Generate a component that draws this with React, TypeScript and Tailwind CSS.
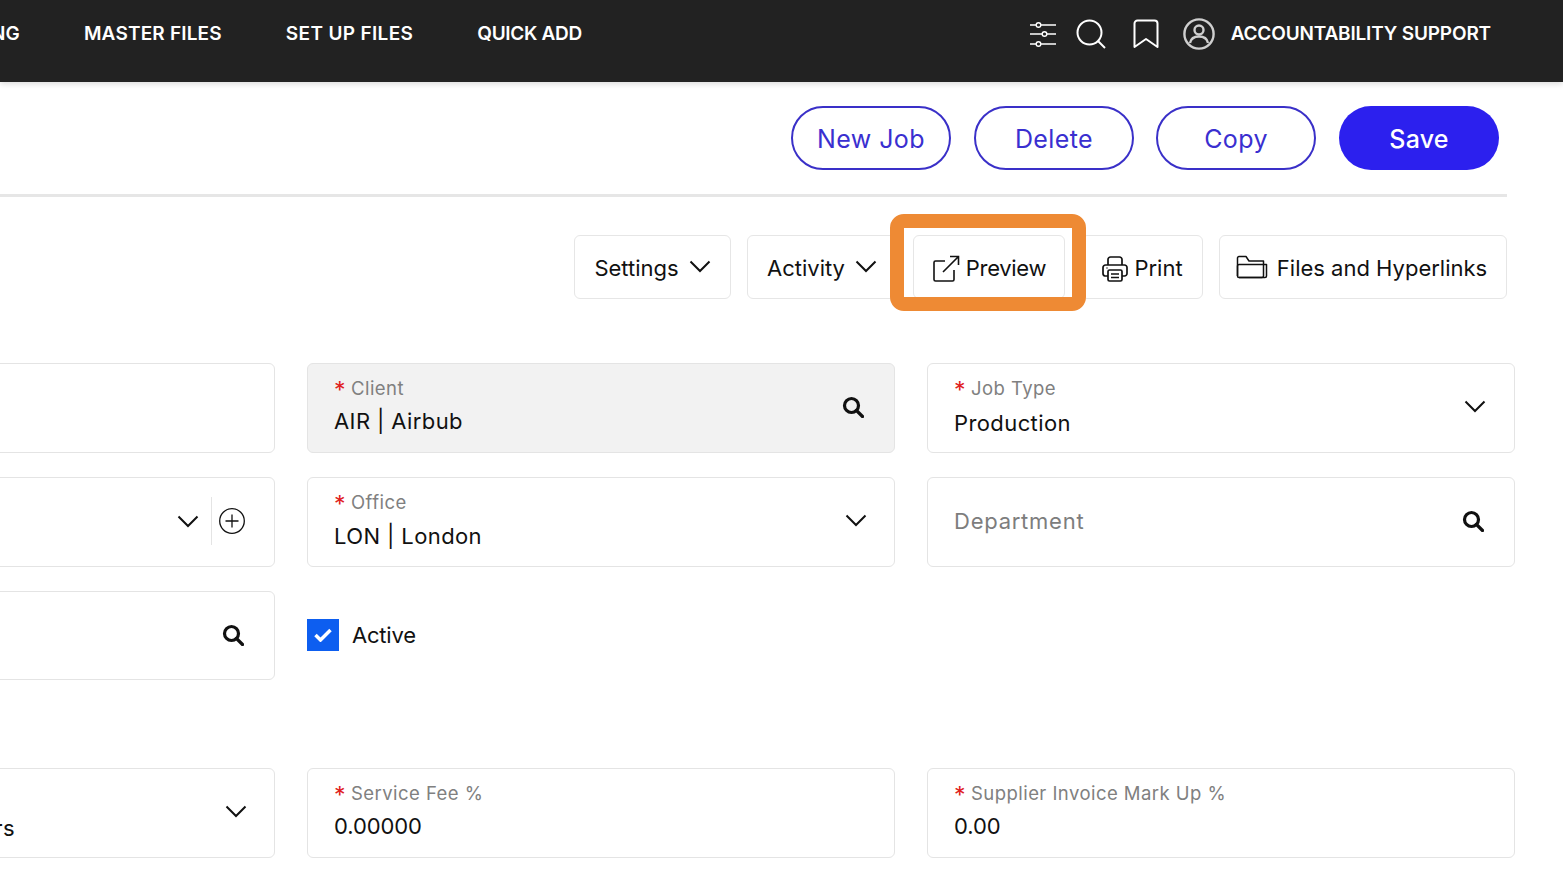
import React from "react";

const font = { fontFamily: "Inter, 'Noto Sans', sans-serif" };

function Chevron({ className = "" }: { className?: string }) {
  return (
    <svg viewBox="0 0 22 13" className={`w-[22px] h-[13px] ${className}`} fill="none" stroke="#111" strokeWidth="2">
      <path d="M1.5 1.5 11 11l9.5-9.5" />
    </svg>
  );
}

function SolidSearch({ className = "" }: { className?: string }) {
  return (
    <svg viewBox="0 0 22 22" className={`w-[22px] h-[22px] ${className}`} fill="none" stroke="#111" strokeWidth="3.2">
      <circle cx="9.5" cy="9.5" r="7" />
      <path d="m14.5 14.5 6 6" strokeLinecap="round" />
    </svg>
  );
}

function Field({
  label,
  value,
  required,
  placeholder,
  icon,
  gray,
  className = "",
  valueClass = "mt-[6px] tracking-[0.4px]",
  heightClass = "h-[90px]",
}: {
  label?: string;
  value?: string;
  required?: boolean;
  placeholder?: string;
  icon?: React.ReactNode;
  gray?: boolean;
  className?: string;
  valueClass?: string;
  heightClass?: string;
}) {
  return (
    <div
      className={`relative rounded-[6px] border border-[#e4e4e4] flex items-center justify-between pl-[26px] pr-[30px] ${heightClass} ${
        gray ? "bg-[#f2f2f2]" : "bg-white"
      } ${className}`}
    >
      {placeholder ? (
        <div className="pb-[2px] text-[22px] text-[#7d7d7d] tracking-[0.75px]">{placeholder}</div>
      ) : (
        <div className="flex flex-col self-start pt-[12px]">
          {label && (
            <div className="h-[24px] text-[18.5px] leading-[24px] text-[#808080] flex tracking-[0.45px]">
              {required && <span className="text-[#e02020] w-[17px] pt-[3px] text-[23px] leading-[23px] tracking-[0]">*</span>}
              <span>{label}</span>
            </div>
          )}
          {value && <div className={`text-[22px] leading-[30px] text-[#111] ${valueClass}`}>{value}</div>}
        </div>
      )}
      {icon}
    </div>
  );
}

function OutlineBtn({ children, className = "" }: { children: React.ReactNode; className?: string }) {
  return (
    <button className={`w-[160px] h-[64px] pt-[4px] rounded-full border-2 border-[#3a30c8] text-[#3a2fd0] text-[25px] tracking-[0.4px] bg-white flex items-center justify-center ${className}`}>
      {children}
    </button>
  );
}

function ToolBtn({ children, className = "" }: { children: React.ReactNode; className?: string }) {
  return (
    <div className={`relative h-[64px] pt-[2px] rounded-[6px] border border-[#e6e6e6] bg-white flex items-center justify-center text-[22px] text-[#111] ${className}`}>
      {children}
    </div>
  );
}

export default function App() {
  return (
    <div className="w-[1563px] h-[873px] overflow-hidden bg-white relative" style={font}>
      <header className="h-[82px] bg-[#222222] flex items-center text-white shadow-[0_2px_6px_rgba(0,0,0,0.15)] relative">
        <div className="flex items-center gap-[64px] ml-[-54px] pb-[14px] text-[19px] font-semibold">
          <span className="tracking-[0.1px]">BILLING</span>
          <span className="tracking-[0.18px]">MASTER FILES</span>
          <span className="tracking-[0.35px]">SET UP FILES</span>
          <span className="tracking-[-0.3px]">QUICK ADD</span>
        </div>
        <div className="ml-auto mr-[72px] flex items-center pb-[14px]">
          <svg viewBox="0 0 26 26" className="w-[26px] h-[26px]" fill="none" stroke="white" strokeWidth="1.4">
            <path d="M0 4h6M11 4h15M0 13h12M17 13h9M0 23h6M11 23h15" />
            <circle cx="8.5" cy="4" r="2.3" />
            <circle cx="14.5" cy="13" r="2.3" />
            <circle cx="8.5" cy="23" r="2.3" />
          </svg>
          <svg viewBox="0 0 30 30" className="w-[30px] h-[30px] ml-[20px]" fill="none" stroke="white" strokeWidth="2">
            <circle cx="13.5" cy="13.5" r="12" />
            <path d="m22 22 7 7" />
          </svg>
          <svg viewBox="0 0 26 30" className="w-[26px] h-[30px] ml-[27px]" fill="none" stroke="white" strokeWidth="2" strokeLinejoin="round">
            <path d="M1.5 4.5a3 3 0 0 1 3-3h17a3 3 0 0 1 3 3v23.5L13 20 1.5 28z" />
          </svg>
          <svg viewBox="0 0 32 32" className="w-[32px] h-[32px] ml-[24px]" fill="none" stroke="#cfcfcf" strokeWidth="2.4">
            <circle cx="16" cy="16" r="14.6" />
            <circle cx="16" cy="12" r="4.5" />
            <path d="M7 25c1-5 4.5-6.5 9-6.5s8 1.500 9 6.500" />
          </svg>
          <span className="ml-[16px] text-[19px] font-semibold tracking-[-0.17px]">ACCOUNTABILITY SUPPORT</span>
        </div>
      </header>

      <div className="flex justify-end gap-[23px] pr-[64px] pt-[24px]">
        <OutlineBtn>New Job</OutlineBtn>
        <OutlineBtn className="mr-[-1px]">Delete</OutlineBtn>
        <OutlineBtn>Copy</OutlineBtn>
        <button className="w-[160px] h-[64px] pt-[4px] rounded-full bg-[#2c20ee] text-white text-[25px] font-medium tracking-[0.2px]">Save</button>
      </div>

      <div className="h-[3px] bg-[#e6e6e6] w-[1507px] mt-[24px]" />

      <div className="flex justify-end gap-[16px] pr-[56px] mt-[38px]">
        <ToolBtn className="w-[157px] gap-[10px]">
          <span>Settings</span>
          <Chevron className="mb-[4px]" />
        </ToolBtn>
        <ToolBtn className="w-[150px] gap-[10px]">
          <span>Activity</span>
          <Chevron className="mb-[4px]" />
        </ToolBtn>
        <ToolBtn className="w-[152px] gap-[6px]">
          <svg viewBox="0 0 28 28" className="w-[28px] h-[28px] mt-[2px]" fill="none" stroke="#111" strokeWidth="1.6">
            <path d="M13 6H3.500A1.500 1.500 0 0 0 2 7.500v17A1.500 1.500 0 0 0 3.500 26h17a1.500 1.500 0 0 0 1.500-1.500V15" />
            <path d="M11 17 26 2M18 1.500h8.500V10" />
          </svg>
          <span className="tracking-[-0.3px]">Preview</span>
          <div className="absolute z-10 left-[-24px] top-[-22px] w-[196px] h-[97px] rounded-[14px] border-[14px] border-[#ee8a34]" />
        </ToolBtn>
        <ToolBtn className="w-[122px] gap-[5px]">
          <svg viewBox="0 0 28 28" className="w-[28px] h-[28px] mt-[2px]" fill="none" stroke="#111" strokeWidth="1.7">
            <path d="M7 10V4.500A2.500 2.500 0 0 1 9.500 2h9A2.500 2.500 0 0 1 21 4.500V10" />
            <path d="M7 21H4a2.500 2.500 0 0 1-2-2.500v-6A2.500 2.500 0 0 1 4.500 10h19a2.500 2.500 0 0 1 2.500 2.500v6a2.500 2.500 0 0 1-2.500 2.500H21" />
            <rect x="7" y="15" width="14" height="11" rx="1.500" />
            <path d="M10 19h8M10 22.500h8M5.500 13h1" />
          </svg>
          <span>Print</span>
        </ToolBtn>
        <ToolBtn className="w-[288px] gap-[9px] pr-[3px]">
          <svg viewBox="0 0 32 24" className="w-[32px] h-[24px] mb-[2px]" fill="none" stroke="#111" strokeWidth="1.500" strokeLinejoin="round">
            <path d="M3 22.500h23a1.500 1.500 0 0 0 1.500-1.500V6H13l-3-4.500H3A1.500 1.500 0 0 0 1.500 3v18a1.500 1.500 0 0 0 1.500 1.500z" />
            <path d="M1.500 21V11a1.500 1.500 0 0 1 1.500-1.500h27.500V21a1.500 1.500 0 0 1-1.500 1.500H3" />
          </svg>
          <span>Files and Hyperlinks</span>
        </ToolBtn>
      </div>

      <div className="ml-[-313px] w-[1828px] mt-[64px] grid grid-cols-[588px_588px_588px] gap-x-[32px] gap-y-[24px]">
        <Field />
        <Field label="Client" value="AIR | Airbub" required gray icon={<SolidSearch className="mb-[2px]" />} />
        <Field label="Job Type" value="Production" required valueClass="mt-[8px] tracking-[0.4px]" icon={<Chevron className="mr-[-2px] mb-[3px]" />} />

        <Field
          icon={
            <div className="flex items-center mb-[2px]">
              <Chevron />
              <div className="w-px h-[48px] bg-[#e4e4e4] ml-[12px] mr-[7px]" />
              <svg viewBox="0 0 26 26" className="w-[26px] h-[26px] mr-[-1px]" fill="none" stroke="#111" strokeWidth="1.300">
                <circle cx="13" cy="13" r="12.300" />
                <path d="M13 6.500v13M6.500 13h13" />
              </svg>
            </div>
          }
        />
        <Field label="Office" value="LON | London" required valueClass="mt-[7px] tracking-[0.4px]" icon={<Chevron className="mr-[-3px] mb-[4px]" />} />
        <Field placeholder="Department" icon={<SolidSearch className="mb-[2px]" />} />

        <Field heightClass="h-[89px]" icon={<SolidSearch className="mb-[2px]" />} />
        <div className="h-[89px] pb-[1px] flex items-center gap-[13px]">
          <div className="w-[32px] h-[32px] bg-[#0d5ef0] flex items-center justify-center">
            <svg viewBox="0 0 18 14" className="w-[18px] h-[14px]" fill="none" stroke="white" strokeWidth="3.500">
              <path d="m1.500 7 5 5L16.500 2" />
            </svg>
          </div>
          <span className="text-[22px] text-[#111] tracking-[-0.2px]">Active</span>
        </div>
        <div />

        <Field
          className="mt-[64px]"
          label=" "
          value="Net 30 Days for Suppliers"
          valueClass="mt-[8px] w-[301px] text-right whitespace-nowrap tracking-[0.4px]"
          icon={<Chevron className="mr-[-3px] mb-[4px]" />}
        />
        <Field className="mt-[64px]" label="Service Fee %" value="0.00000" required valueClass="mt-[6px] tracking-[-0.1px]" />
        <Field className="mt-[64px]" label="Supplier Invoice Mark Up %" value="0.00" required valueClass="mt-[6px] tracking-[-0.1px]" />
      </div>
    </div>
  );
}
